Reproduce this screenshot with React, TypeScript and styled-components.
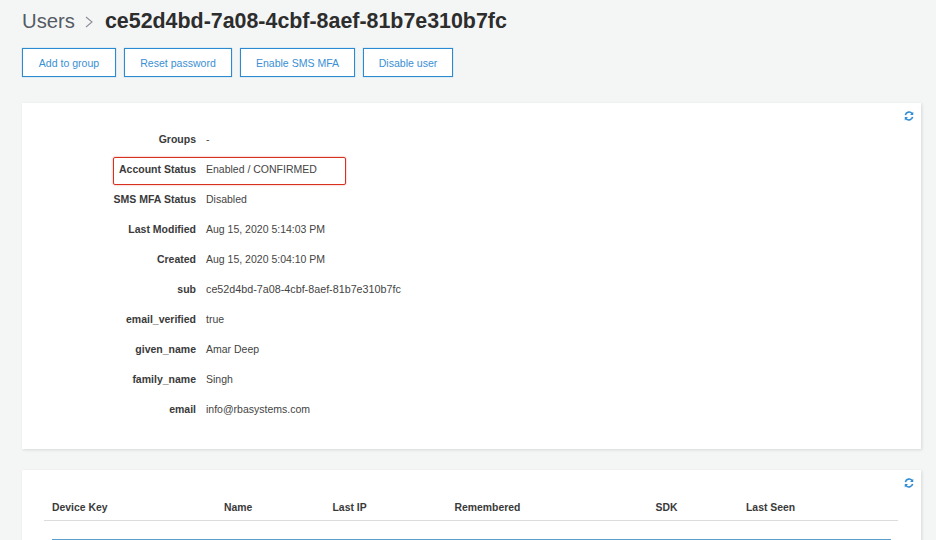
import React from "react";
import styled, { createGlobalStyle } from "styled-components";

const Global = createGlobalStyle`
  html, body { margin: 0; padding: 0; background: #f4f6f6; }
  body { font-family: "Liberation Sans", Arial, sans-serif; width: 936px; height: 540px; overflow: hidden; }
`;
const Page = styled.div`
  padding: 9px 15px 0 22px;
  height: 531px;
  overflow: hidden;
  display: flex;
  flex-direction: column;
`;
const Title = styled.h1`
  margin: 0;
  display: flex;
  align-items: center;
  height: 24px;
  font-size: 20.3px;
  font-weight: 400;
  color: #545b64;
`;
const Chevron = styled.svg`
  width: 10px;
  height: 12px;
  margin: 1px 11px 0 9px;
  flex: none;
`;
const TitleId = styled.span`
  font-size: 21.4px;
  font-weight: 700;
  color: #2d2d2d;
`;
const Actions = styled.div`
  display: flex;
  gap: 8px;
  margin-top: 15px;
`;
const Action = styled.button`
  height: 29px;
  box-sizing: border-box;
  padding: 0;
  width: ${(p: { $w: number }) => p.$w}px;
  border: 1px solid #2b8ad0;
  box-shadow: 0 0 1px rgba(43, 138, 208, 0.6);
  background: #fff;
  color: #3a90d4;
  font: 400 10.55px "Liberation Sans", Arial, sans-serif;
  white-space: nowrap;
`;
const Card = styled.section`
  position: relative;
  background: #fff;
  width: 899px;
  flex: none;
  box-shadow: 1px 1px 3px rgba(0, 0, 0, 0.12);
`;
const DetailCard = styled(Card)`
  margin-top: 26px;
  height: 346px;
  padding-top: 21px;
  box-sizing: border-box;
`;
const DeviceCard = styled(Card)`
  margin-top: 21px;
  height: 80px;
  padding: 31px 23px 0 23px;
  box-sizing: border-box;
`;
const Refresh = styled.svg`
  position: absolute;
  top: 8px;
  right: 7.5px;
  width: 10px;
  height: 10px;
`;
const Detail = styled.div`
  display: grid;
  grid-template-columns: 174px 1fr;
  column-gap: 10px;
  grid-auto-rows: 30px;
`;
const Key = styled.div`
  text-align: right;
  font-size: 10.5px;
  font-weight: 700;
  line-height: 30px;
  color: #3a3a3a;
`;
const Val = styled.div<{ $mono?: boolean }>`
  font-size: ${(p) => (p.$mono ? 10.75 : 10.5)}px;
  line-height: 30px;
  color: #444;
`;
const Highlight = styled.div`
  position: absolute;
  left: 91px;
  top: 54px;
  width: 233px;
  height: 28px;
  box-sizing: border-box;
  border: 1px solid #d8301f;
  border-radius: 2px;
  box-shadow: 0 0 1.5px rgba(216, 48, 31, 0.75);
`;
const Head = styled.div`
  display: grid;
  grid-template-columns: 179px 108.5px 122px 201px 90.5px 1fr;
  padding: 0 0 6px 0;
  margin-left: -1px;
  width: 854px;
  box-sizing: border-box;
  border-bottom: 1px solid #dcdcdc;
  font-size: 10.4px;
  font-weight: 700;
  color: #3a3a3a;
  line-height: 13px;
`;
const HeadCell = styled.div`
  padding-left: ${(p: { $first?: boolean }) => (p.$first ? 8 : 1)}px;
`;
const Rule = styled.div`
  height: 1px;
  background: #5c9fce;
  margin: 18px 7px 0 7px;
  width: 839px;
`;

const RefreshIcon = () => (
  <Refresh viewBox="0 0 16 16" fill="none" stroke="#2f8bd2" strokeWidth="2.6">
    <path d="M2.2 6.5A6 6 0 0 1 13 4.2" />
    <path d="M14.8 1v5.5H9.6z" fill="#2f8bd2" stroke="none" />
    <path d="M13.8 9.5A6 6 0 0 1 3 11.8" />
    <path d="M1.2 15V9.5h5.2z" fill="#2f8bd2" stroke="none" />
  </Refresh>
);

const rows: [string, string][] = [
  ["Groups", "-"],
  ["Account Status", "Enabled / CONFIRMED"],
  ["SMS MFA Status", "Disabled"],
  ["Last Modified", "Aug 15, 2020 5:14:03 PM"],
  ["Created", "Aug 15, 2020 5:04:10 PM"],
  ["sub", "ce52d4bd-7a08-4cbf-8aef-81b7e310b7fc"],
  ["email_verified", "true"],
  ["given_name", "Amar Deep"],
  ["family_name", "Singh"],
  ["email", "info@rbasystems.com"],
];
const heads = ["Device Key", "Name", "Last IP", "Remembered", "SDK", "Last Seen"];
const actions: [string, number][] = [
  ["Add to group", 94],
  ["Reset password", 108],
  ["Enable SMS MFA", 115],
  ["Disable user", 90],
];

export default function App() {
  return (
    <>
      <Global />
      <Page>
        <Title>
          Users
          <Chevron viewBox="0 0 10 12" fill="none" stroke="#8a9096" strokeWidth="1.1">
            <path d="M2 1l6 5-6 5" />
          </Chevron>
          <TitleId>ce52d4bd-7a08-4cbf-8aef-81b7e310b7fc</TitleId>
        </Title>
        <Actions>
          {actions.map(([a, w]) => (
            <Action key={a} $w={w}>{a}</Action>
          ))}
        </Actions>
        <DetailCard>
          <RefreshIcon />
          <Detail>
            {rows.map(([k, v]) => (
              <React.Fragment key={k}>
                <Key>{k}</Key>
                <Val $mono={k === "sub"}>{v}</Val>
              </React.Fragment>
            ))}
          </Detail>
          <Highlight />
        </DetailCard>
        <DeviceCard>
          <RefreshIcon />
          <Head>
            {heads.map((h, i) => (
              <HeadCell key={h} $first={i === 0}>{h}</HeadCell>
            ))}
          </Head>
          <Rule />
        </DeviceCard>
      </Page>
    </>
  );
}
